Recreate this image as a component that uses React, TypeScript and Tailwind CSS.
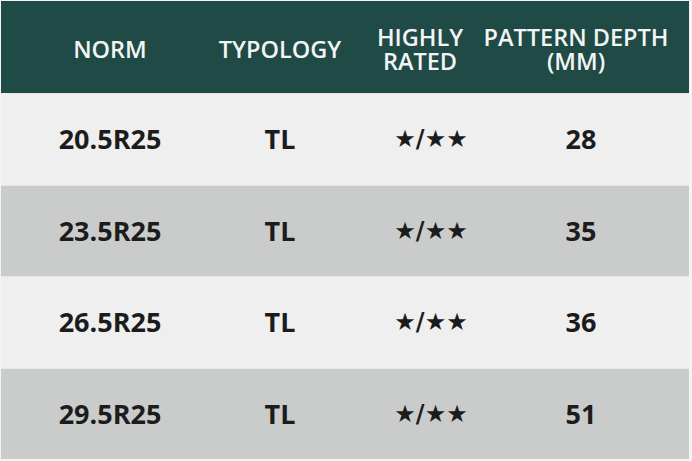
const ROWS = [
  { norm: '20.5R25', type: 'TL', rated: '★/★★', depth: '28' },
  { norm: '23.5R25', type: 'TL', rated: '★/★★', depth: '35' },
  { norm: '26.5R25', type: 'TL', rated: '★/★★', depth: '36' },
  { norm: '29.5R25', type: 'TL', rated: '★/★★', depth: '51' },
];

const COLS = 'grid grid-cols-[218px_122px_158px_154px_1fr]';

export default function App() {
  return (
    <div className="h-[461px] w-[692px] bg-[#f4f4f4] pl-[1px] pr-[3px] pt-[1px] pb-[2px]" style={{ fontFamily: '"Open Sans", "Noto Sans", sans-serif' }}>
      <div className="flex h-full flex-col">
        <div className={`${COLS} h-[92px] items-center bg-[#1f4a46] pt-[4px] text-[23.5px] font-semibold leading-[24px] text-[#f2f5f4]`}>
          <div className="flex justify-center">NORM</div>
          <div className="flex justify-center">TYPOLOGY</div>
          <div className="flex flex-col items-center">
            <span>HIGHLY</span>
            <span>RATED</span>
          </div>
          <div className="flex flex-col items-center whitespace-nowrap">
            <span>PATTERN DEPTH</span>
            <span>(MM)</span>
          </div>
          <div />
        </div>

        {ROWS.map((row, index) => (
          <div
            key={row.norm}
            className={`${COLS} flex-1 items-center border-t border-[#e6e8e8] text-[27px] font-bold text-[#1c1c1c] ${index % 2 === 0 ? 'bg-[#efefef]' : 'bg-[#cacccc]'}`}
          >
            <div className="flex justify-center">{row.norm}</div>
            <div className="flex justify-center">{row.type}</div>
            <div className="flex justify-center whitespace-nowrap pl-[22px] text-[24px]" style={{ fontFamily: '"DejaVu Sans", sans-serif' }}>{row.rated}</div>
            <div className="flex justify-center pl-[10px]">{row.depth}</div>
            <div />
          </div>
        ))}
      </div>
    </div>
  );
}
